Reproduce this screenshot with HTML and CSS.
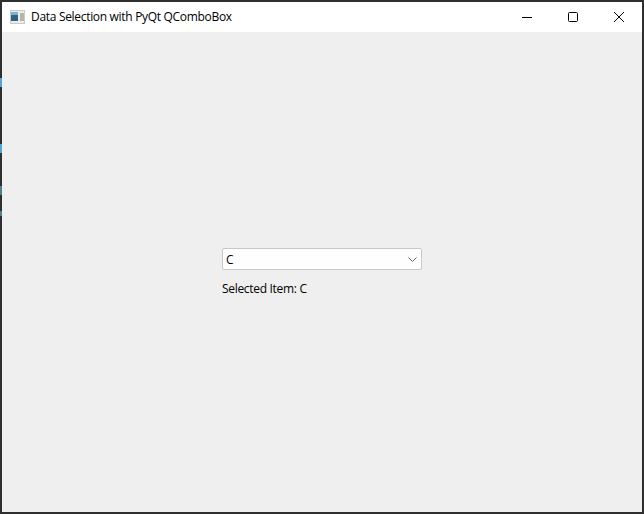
FILE: index.html
```html
<!DOCTYPE html>
<html lang="en">
<head>
  <meta charset="UTF-8">
  <title>Data Selection with PyQt QComboBox</title>
  <link rel="stylesheet" href="styles.css">
</head>
<body>
  <div class="window">
    <div class="titlebar">
      <svg class="app-icon" width="16" height="16" viewBox="0 0 16 16">
        <rect x="0" y="1" width="15" height="14" fill="#c9c9c5"/>
        <rect x="1" y="2" width="13" height="12" fill="#ecece8"/>
        <rect x="1" y="3" width="7" height="9" fill="#2f6480"/>
        <rect x="1" y="3" width="7" height="3" fill="#7ab4d2"/>
        <rect x="10" y="4" width="4" height="8" fill="#b4b4b0"/>
      </svg>
      <span class="title">Data Selection with PyQt QComboBox</span>
      <div class="controls">
        <div class="ctl">
          <svg width="12" height="12" viewBox="0 0 12 12"><path d="M1 6.5H11" stroke="#000" fill="none"/></svg>
        </div>
        <div class="ctl">
          <svg width="12" height="12" viewBox="0 0 12 12"><rect x="1.5" y="1.5" width="9" height="9" rx="1" stroke="#000" fill="none"/></svg>
        </div>
        <div class="ctl">
          <svg width="12" height="12" viewBox="0 0 12 12"><path d="M1 1L11 11M11 1L1 11" stroke="#000" fill="none"/></svg>
        </div>
      </div>
    </div>
    <div class="content">
      <div class="form">
        <div class="combo">
          <span>C</span>
          <svg width="9" height="5" viewBox="0 0 9 5"><path d="M0.5 0.5L4.5 4.5L8.5 0.5" stroke="#606060" fill="none"/></svg>
        </div>
        <div class="selected">Selected Item: C</div>
      </div>
    </div>
    <!-- bits of the desktop showing through the frame -->
    <span class="speck speck-a"></span>
    <span class="speck speck-b"></span>
    <span class="speck speck-c"></span>
    <span class="speck speck-d"></span>
  </div>
</body>
</html>
```
FILE: styles.css
```css
* {
  margin: 0;
  padding: 0;
  box-sizing: border-box;
}
html, body {
  width: 644px;
  height: 514px;
  overflow: hidden;
}
body {
  font-family: "Open Sans", "Noto Sans", sans-serif;
  font-size: 12px;
  color: #000;
}
/* Window frame */
.window {
  position: relative;
  width: 644px;
  height: 514px;
  border: 2px solid #2f2f2f;
  display: flex;
  flex-direction: column;
  background: #efefef;
}
.titlebar {
  height: 30px;
  background: #fff;
  display: flex;
  align-items: center;
  padding-left: 8px;
}
.app-icon {
  margin-right: 5px;
}
.title {
  flex: 1;
  letter-spacing: -0.31px;
  margin-top: -2px;
}
.controls {
  display: flex;
}
.ctl {
  width: 46px;
  height: 30px;
  display: flex;
  align-items: center;
  justify-content: center;
}
/* Main area */
.content {
  flex: 1;
  display: flex;
  align-items: center;
  justify-content: center;
}
.form {
  width: 200px;
  display: flex;
  flex-direction: column;
  gap: 10px;
}
.combo {
  height: 22px;
  background: #fdfefd;
  border: 1px solid #c8c8c8;
  border-radius: 2px;
  display: flex;
  align-items: center;
  justify-content: space-between;
  padding: 1px 3px 0;
}
.combo svg {
  margin-right: 1px;
}
.selected {
  line-height: 17px;
  letter-spacing: -0.31px;
}
/* Frame specks */
.speck {
  position: absolute;
  left: -2px;
  width: 2px;
}
.speck-a {
  top: 76px;
  height: 9px;
  background: #4fa6d8;
}
.speck-b {
  top: 142px;
  height: 9px;
  background: #4fa6d8;
}
.speck-c {
  top: 184px;
  height: 9px;
  background: #4d7f8c;
}
.speck-d {
  top: 209px;
  height: 5px;
  background: #4d7f8c;
}
```
